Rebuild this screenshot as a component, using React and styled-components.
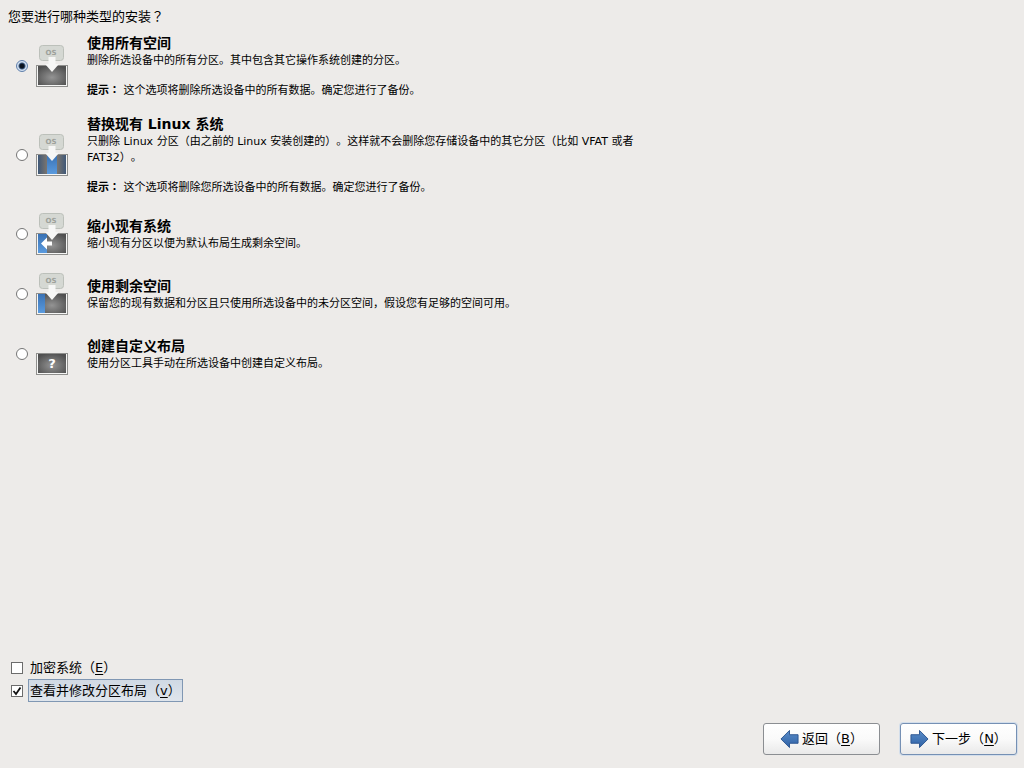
import React, { useState } from 'react';

//css
import styled, { createGlobalStyle } from "styled-components"

const optionArr = [
    {
        id: "all",
        title: "使用所有空间",
        desc: "删除所选设备中的所有分区。其中包含其它操作系统创建的分区。",
        hint: "这个选项将删除所选设备中的所有数据。确定您进行了备份。",
    },
    {
        id: "replace",
        title: "替换现有 Linux 系统",
        desc: "只删除 Linux 分区（由之前的 Linux 安装创建的）。这样就不会删除您存储设备中的其它分区（比如 VFAT 或者 FAT32）。",
        hint: "这个选项将删除您所选设备中的所有数据。确定您进行了备份。",
    },
    {
        id: "shrink",
        title: "缩小现有系统",
        desc: "缩小现有分区以便为默认布局生成剩余空间。",
    },
    {
        id: "free",
        title: "使用剩余空间",
        desc: "保留您的现有数据和分区且只使用所选设备中的未分区空间，假设您有足够的空间可用。",
    },
    {
        id: "custom",
        title: "创建自定义布局",
        desc: "使用分区工具手动在所选设备中创建自定义布局。",
    },
];

// 磁盘图标
const DiskIcon = ({ type }) => {
    const gray = `gray-${type}`;
    const blue = `blue-${type}`;
    const side = `side-${type}`;
    return(
        <DiskSvg viewBox="0 0 34 44" aria-hidden="true">
            <defs>
                <radialGradient id={gray} cx="0.5" cy="0.6" r="0.65">
                    <stop offset="0" stopColor="#949494"/>
                    <stop offset="1" stopColor="#505050"/>
                </radialGradient>
                <linearGradient id={blue} x1="0" y1="0" x2="0" y2="1">
                    <stop offset="0" stopColor="#3a72b4"/>
                    <stop offset="1" stopColor="#5a9ade"/>
                </linearGradient>
                <linearGradient id={side} x1="0" y1="0" x2="1" y2="0">
                    <stop offset="0" stopColor="#3f5878"/>
                    <stop offset="0.3" stopColor="#77736f"/>
                    <stop offset="0.7" stopColor="#77736f"/>
                    <stop offset="1" stopColor="#3f5878"/>
                </linearGradient>
            </defs>
            <rect x="1.5" y="21.5" width="31" height="21" fill="#f6f6f5" stroke="#8f8f8d"/>
            <rect x="3" y="22" width="28" height="19" fill={`url(#${gray})`}/>
            {type === "replace" && <>
                <rect x="3" y="22" width="28" height="19" fill={`url(#${side})`}/>
                <rect x="12" y="22" width="10" height="19" fill={`url(#${blue})`}/>
            </>}
            {type === "shrink" && <rect x="3" y="22" width="9" height="19" fill={`url(#${blue})`}/>}
            {type === "free" && <rect x="3" y="22" width="7" height="19" fill={`url(#${blue})`}/>}
            {type === "custom"
                ? <text x="17" y="36" textAnchor="middle" fontSize="13" fontWeight="700" fill="#fff">?</text>
                : <>
                    <rect x="4.5" y="1.5" width="24" height="15" rx="3" fill="#d5d8d3" stroke="#bcc0ba"/>
                    <text x="16" y="11" textAnchor="middle" fontSize="7" fontWeight="700" fill="#9da19b">OS</text>
                    <path d="M13.500 13h7v7h3.500l-7 8l-7 -8h3.500z" fill="#f7f7f6"/>
                </>
            }
            {type === "shrink" && <path d="M6 31.500l6 -6v4h5v4h-5v4z" fill="#fff"/>}
        </DiskSvg>
    )
}

const ArrowIcon = ({ next }) => {
    return(
        <ArrowSvg viewBox="0 0 20 20" $next={next} aria-hidden="true">
            <defs>
                <linearGradient id={next ? "arrowNext" : "arrowBack"} x1="0" y1="0" x2="0" y2="1">
                    <stop offset="0" stopColor="#5a8cc8"/>
                    <stop offset="1" stopColor="#2f62a6"/>
                </linearGradient>
            </defs>
            <path
                d="M1 10L10 1V5.500H19V14.500H10V19Z"
                fill={`url(#${next ? "arrowNext" : "arrowBack"})`}
                stroke="#2b5590"
                strokeLinejoin="round"
            />
        </ArrowSvg>
    )
}

const App = () => {

    const [selected, setSelected] = useState("all");
    const [encrypt, setEncrypt] = useState(false);
    const [review, setReview] = useState(true);

    return(
        <PageWrap lang="zh-CN">
            <GlobalStyle />

            {/* 安装类型 */}
            <Question id="question">您要进行哪种类型的安装<Mark lang="zh-TW">？</Mark></Question>
            <OptionList role="radiogroup" aria-labelledby="question">
                {
                    optionArr.map((item) => {
                        return(
                            <Option key={item.id}>
                                <Radio
                                    name="installType"
                                    value={item.id}
                                    checked={selected === item.id}
                                    onChange={() => setSelected(item.id)}
                                />
                                <DiskIcon type={item.id}/>
                                <OptionText>
                                    <OptionTitle>{item.title}</OptionTitle>
                                    <OptionDesc>{item.desc}</OptionDesc>
                                    {item.hint &&
                                        <OptionHint><b>提示<Mark lang="zh-TW">：</Mark></b> {item.hint}</OptionHint>
                                    }
                                </OptionText>
                            </Option>
                        )
                    })
                }
            </OptionList>

            {/* 附加选项 */}
            <CheckGroup>
                <CheckRow>
                    <Checkbox id="encrypt" checked={encrypt} onChange={() => setEncrypt(!encrypt)}/>
                    <CheckLabel htmlFor="encrypt">加密系统（<u>E</u>）</CheckLabel>
                </CheckRow>
                <CheckRow>
                    <Checkbox id="review" checked={review} onChange={() => setReview(!review)}/>
                    <CheckLabel htmlFor="review" $active>查看并修改分区布局（<u>v</u>）</CheckLabel>
                </CheckRow>
            </CheckGroup>

            {/* 按钮 */}
            <ButtonBar>
                <NavButton type="button">
                    <ArrowIcon />
                    <span>返回（<u>B</u>）</span>
                </NavButton>
                <NavButton type="button" $primary>
                    <ArrowIcon next/>
                    <span>下一步（<u>N</u>）</span>
                </NavButton>
            </ButtonBar>
        </PageWrap>
    )
};

export default App;

const GlobalStyle = createGlobalStyle`
    * {
        box-sizing:border-box;
    }
    body {
        margin:0;
        background-color:#edebe9;
        color:#000;
        font-family:"DejaVu Sans", "Noto Sans CJK SC", sans-serif;
        font-size:13px;
        text-spacing-trim:space-all;
    }
    u {
        text-underline-offset:2px;
    }
`

const PageWrap = styled.div`
    min-height:100vh;
    display:flex;
    flex-direction:column;
`
const Question = styled.h1`
    margin:8px 8px 7px;
    font-size:13px;
    font-weight:400;
    line-height:18px;
`
// 居中的全角标点
const Mark = styled.span`
    font-family:"DejaVu Sans", "Noto Sans CJK TC", sans-serif;
`

// -- Option
const OptionList = styled.div`
    flex:1;
    display:flex;
    flex-direction:column;
    gap:15px;
    padding:0 16px;
`
const Option = styled.label`
    display:flex;
    align-items:center;
    min-height:45px;
`
const Radio = styled.input.attrs({ type: "radio" })`
    appearance:none;
    flex:none;
    width:12px;
    height:12px;
    margin:0 7px 0 0;
    border:1px solid #757575;
    border-radius:50%;
    background-color:#fff;
    &:checked {
        border-color:#5f7fab;
        background:radial-gradient(circle, #0b1420 0 2px, #3d5a80 3px, #d3e1f2 4px);
    }
`
const DiskSvg = styled.svg`
    flex:none;
    width:34px;
    height:44px;
    margin-right:18px;
`
const OptionText = styled.div`
    max-width:560px;
    font-size:11px;
    line-height:16px;
`
const OptionTitle = styled.h2`
    margin:0;
    font-size:14px;
    font-weight:700;
    line-height:20px;
`
const OptionDesc = styled.p`
    margin:0;
`
const OptionHint = styled.p`
    margin:14px 0 0;
`

// -- Check
const CheckGroup = styled.div`
    padding:0 11px;
`
const CheckRow = styled.div`
    display:flex;
    align-items:center;
`
const Checkbox = styled.input.attrs({ type: "checkbox" })`
    appearance:none;
    flex:none;
    width:12px;
    height:12px;
    margin:0 5px 0 0;
    border:1px solid #6c6c6c;
    background-color:#fff;
    &:checked {
        background-image:url("data:image/svg+xml,%3Csvg xmlns='http://www.w3.org/2000/svg' viewBox='0 0 10 10'%3E%3Cpath d='M1.500 5L4 8L8.500 1.500' fill='none' stroke='%23111' stroke-width='1.800'/%3E%3C/svg%3E");
    }
`
const CheckLabel = styled.label`
    padding:0 1px;
    border:1px solid ${(props) => props.$active ? "#8097b3" : "transparent"};
    background:${(props) => props.$active ? "linear-gradient(#d0d9e4, #dfe5ec)" : "none"};
    line-height:21px;
`

// -- Button
const ButtonBar = styled.div`
    display:flex;
    justify-content:flex-end;
    gap:20px;
    padding:21px 7px 13px;
`
const NavButton = styled.button`
    display:flex;
    align-items:center;
    justify-content:center;
    gap:3px;
    width:117px;
    height:32px;
    padding:0;
    border:1px solid ${(props) => props.$primary ? "#7590b4" : "#8b8e92"};
    border-radius:3px;
    background:linear-gradient(#fff, #fafafa 50%, #e9e9e9);
    box-shadow:${(props) => props.$primary ? "0 0 0 1px #d3deeb" : "none"};
    color:#000;
    font-family:inherit;
    font-size:13px;
    line-height:18px;
    white-space:nowrap;
`
const ArrowSvg = styled.svg`
    width:19px;
    height:20px;
    transform:${(props) => props.$next ? "scaleX(-1)" : "none"};
`
